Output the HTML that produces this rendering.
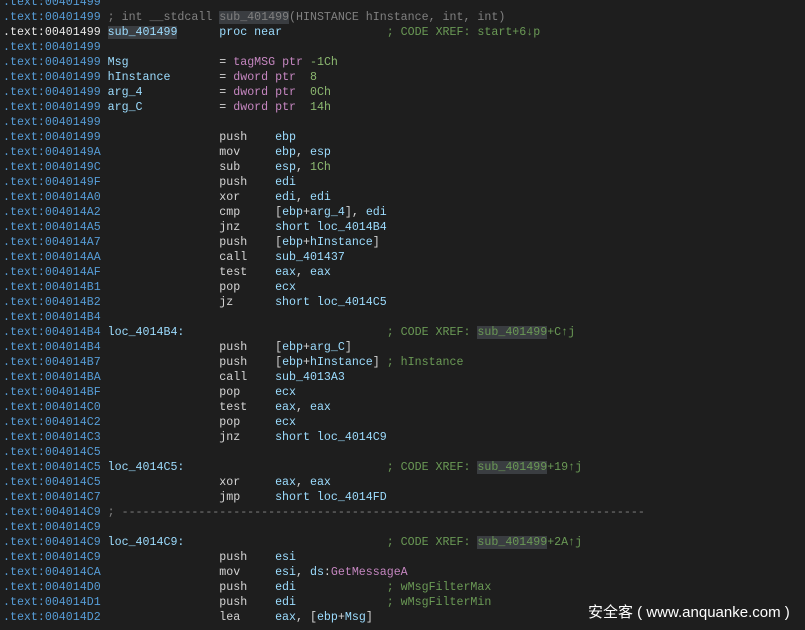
<!DOCTYPE html>
<html><head><meta charset="utf-8"><style>
html,body{margin:0;padding:0;background:#1e1e1e;width:805px;height:630px;overflow:hidden}
pre{margin:0;position:absolute;left:3px;top:-5px;font-family:"Liberation Mono",monospace;font-size:11.63px;line-height:15px;color:#d4d4d4;white-space:pre}
.a{color:#569cd6}.w{color:#e8e8e8}.g{color:#808080}.c{color:#6a9955}.r{color:#9cdcfe}.p{color:#c586c0}.n{color:#8cb870}.m{color:#d4d4d4}
.h{background:#3a3d41}.wm{position:absolute;left:588px;top:601px;color:#fff;font-family:"Liberation Sans","Noto Sans CJK SC",sans-serif;font-size:15px}
</style></head><body>
<pre><span class="a">.text:00401499</span>
<span class="a">.text:00401499</span> <span class="g">; int __stdcall <span class="h">sub_401499</span>(HINSTANCE hInstance, int, int)</span>
<span class="w">.text:00401499</span> <span class="r h">sub_401499</span>      <span class="r">proc near</span>               <span class="c">; CODE XREF: start+6↓p</span>
<span class="a">.text:00401499</span>
<span class="a">.text:00401499</span> <span class="r">Msg</span>             = <span class="p">tagMSG ptr</span> <span class="n">-1Ch</span>
<span class="a">.text:00401499</span> <span class="r">hInstance</span>       = <span class="p">dword ptr</span>  <span class="n">8</span>
<span class="a">.text:00401499</span> <span class="r">arg_4</span>           = <span class="p">dword ptr</span>  <span class="n">0Ch</span>
<span class="a">.text:00401499</span> <span class="r">arg_C</span>           = <span class="p">dword ptr</span>  <span class="n">14h</span>
<span class="a">.text:00401499</span>
<span class="a">.text:00401499</span>                 push    <span class="r">ebp</span>
<span class="a">.text:0040149A</span>                 mov     <span class="r">ebp</span>, <span class="r">esp</span>
<span class="a">.text:0040149C</span>                 sub     <span class="r">esp</span>, <span class="n">1Ch</span>
<span class="a">.text:0040149F</span>                 push    <span class="r">edi</span>
<span class="a">.text:004014A0</span>                 xor     <span class="r">edi</span>, <span class="r">edi</span>
<span class="a">.text:004014A2</span>                 cmp     [<span class="r">ebp</span>+<span class="r">arg_4</span>], <span class="r">edi</span>
<span class="a">.text:004014A5</span>                 jnz     <span class="r">short loc_4014B4</span>
<span class="a">.text:004014A7</span>                 push    [<span class="r">ebp</span>+<span class="r">hInstance</span>]
<span class="a">.text:004014AA</span>                 call    <span class="r">sub_401437</span>
<span class="a">.text:004014AF</span>                 test    <span class="r">eax</span>, <span class="r">eax</span>
<span class="a">.text:004014B1</span>                 pop     <span class="r">ecx</span>
<span class="a">.text:004014B2</span>                 jz      <span class="r">short loc_4014C5</span>
<span class="a">.text:004014B4</span>
<span class="a">.text:004014B4</span> <span class="r">loc_4014B4:</span>                             <span class="c">; CODE XREF: <span class="h">sub_401499</span>+C↑j</span>
<span class="a">.text:004014B4</span>                 push    [<span class="r">ebp</span>+<span class="r">arg_C</span>]
<span class="a">.text:004014B7</span>                 push    [<span class="r">ebp</span>+<span class="r">hInstance</span>] <span class="c">; hInstance</span>
<span class="a">.text:004014BA</span>                 call    <span class="r">sub_4013A3</span>
<span class="a">.text:004014BF</span>                 pop     <span class="r">ecx</span>
<span class="a">.text:004014C0</span>                 test    <span class="r">eax</span>, <span class="r">eax</span>
<span class="a">.text:004014C2</span>                 pop     <span class="r">ecx</span>
<span class="a">.text:004014C3</span>                 jnz     <span class="r">short loc_4014C9</span>
<span class="a">.text:004014C5</span>
<span class="a">.text:004014C5</span> <span class="r">loc_4014C5:</span>                             <span class="c">; CODE XREF: <span class="h">sub_401499</span>+19↑j</span>
<span class="a">.text:004014C5</span>                 xor     <span class="r">eax</span>, <span class="r">eax</span>
<span class="a">.text:004014C7</span>                 jmp     <span class="r">short loc_4014FD</span>
<span class="a">.text:004014C9</span> <span class="g">; ---------------------------------------------------------------------------</span>
<span class="a">.text:004014C9</span>
<span class="a">.text:004014C9</span> <span class="r">loc_4014C9:</span>                             <span class="c">; CODE XREF: <span class="h">sub_401499</span>+2A↑j</span>
<span class="a">.text:004014C9</span>                 push    <span class="r">esi</span>
<span class="a">.text:004014CA</span>                 mov     <span class="r">esi</span>, <span class="r">ds</span>:<span class="p">GetMessageA</span>
<span class="a">.text:004014D0</span>                 push    <span class="r">edi</span>             <span class="c">; wMsgFilterMax</span>
<span class="a">.text:004014D1</span>                 push    <span class="r">edi</span>             <span class="c">; wMsgFilterMin</span>
<span class="a">.text:004014D2</span>                 lea     <span class="r">eax</span>, [<span class="r">ebp</span>+<span class="r">Msg</span>]
</pre>
<div class="wm">安全客 ( www.anquanke.com )</div>
</body></html>
